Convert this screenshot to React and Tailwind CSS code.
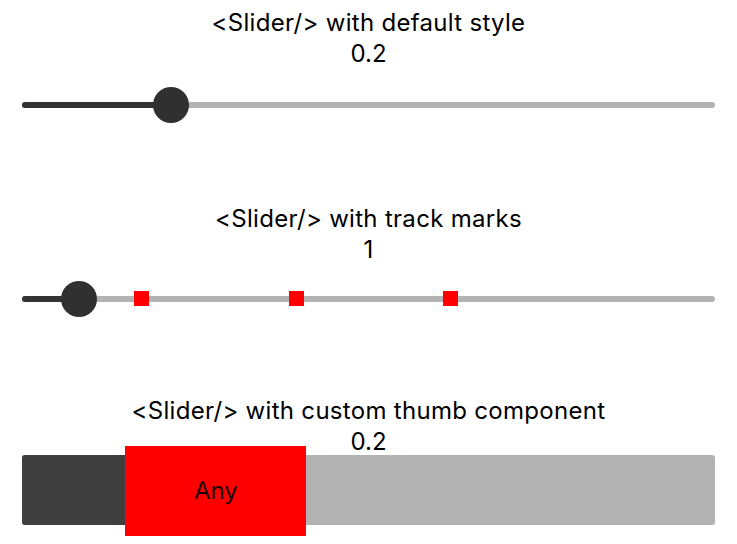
import { useState } from 'react';

// Track geometry shared by all three sliders
const TRACK_WIDTH = 693;

function Caption({ title, value, valueHeight = 'h-[31px] leading-[31px]' }) {
  return (
    <>
      <div className="h-[31px] leading-[31px] text-[24px] tracking-[0.3px] text-center">{title}</div>
      <div className={`${valueHeight} text-[24px] text-center`}>{value}</div>
    </>
  );
}

// Thin track with a round thumb
function DefaultSlider({ value, marks = [], thumbLeft }) {
  const thumb = 36;
  const left = thumbLeft ?? value * (TRACK_WIDTH - thumb);
  return (
    <div className="relative w-[693px] h-[36px] flex items-center">
      <div className="w-full h-[6px] rounded-full bg-[#b3b3b3] flex">
        <div className="h-full rounded-full bg-[#333333]" style={{ width: left + thumb / 2 }} />
      </div>
      {marks.map((m) => (
        <div key={m} className="absolute top-[10.5px] w-[15px] h-[15px] bg-[#ff0000]" style={{ left: m }} />
      ))}
      <div className="absolute top-0 w-[36px] h-[36px] rounded-full bg-[#303030]" style={{ left }} />
    </div>
  );
}

// Chunky track with a block thumb holding a label
function CustomThumbSlider({ value }) {
  const thumbW = 181;
  const left = value * (TRACK_WIDTH - thumbW);
  return (
    <div className="relative w-[693px] h-[70px]">
      <div className="w-full h-full rounded-[3px] bg-[#b3b3b3] flex overflow-hidden">
        <div className="h-full bg-[#3f3f3f]" style={{ width: left + thumbW / 2 }} />
      </div>
      <div
        className="absolute top-[-9px] w-[181px] h-[90px] bg-[#ff0000] flex items-center justify-center text-[24px] text-[#1a0000]"
        style={{ left: left + 1 }}
      >
        Any
      </div>
    </div>
  );
}

export default function App() {
  const [first] = useState(0.2);
  const [second] = useState(1);
  const [third] = useState(0.2);

  return (
    <div className="w-[737px] h-[544px] bg-white text-black font-['Inter',sans-serif] overflow-hidden flex flex-col items-center">
      <section className="mt-[7px] flex flex-col items-center">
        <Caption title="<Slider/> with default style" value={first} />
        <div className="h-[72px] flex items-center">
          <DefaultSlider value={first} />
        </div>
      </section>

      <section className="mt-[62px] flex flex-col items-center">
        <Caption title="<Slider/> with track marks" value={second} />
        <div className="h-[67px] flex items-center">
          <DefaultSlider value={second} thumbLeft={39} marks={[112, 267, 421]} />
        </div>
      </section>

      <section className="mt-[63px] flex flex-col items-center">
        <Caption
          title="<Slider/> with custom thumb component"
          value={third}
          valueHeight="h-[29px] leading-[31px]"
        />
        <CustomThumbSlider value={third} />
      </section>
    </div>
  );
}
